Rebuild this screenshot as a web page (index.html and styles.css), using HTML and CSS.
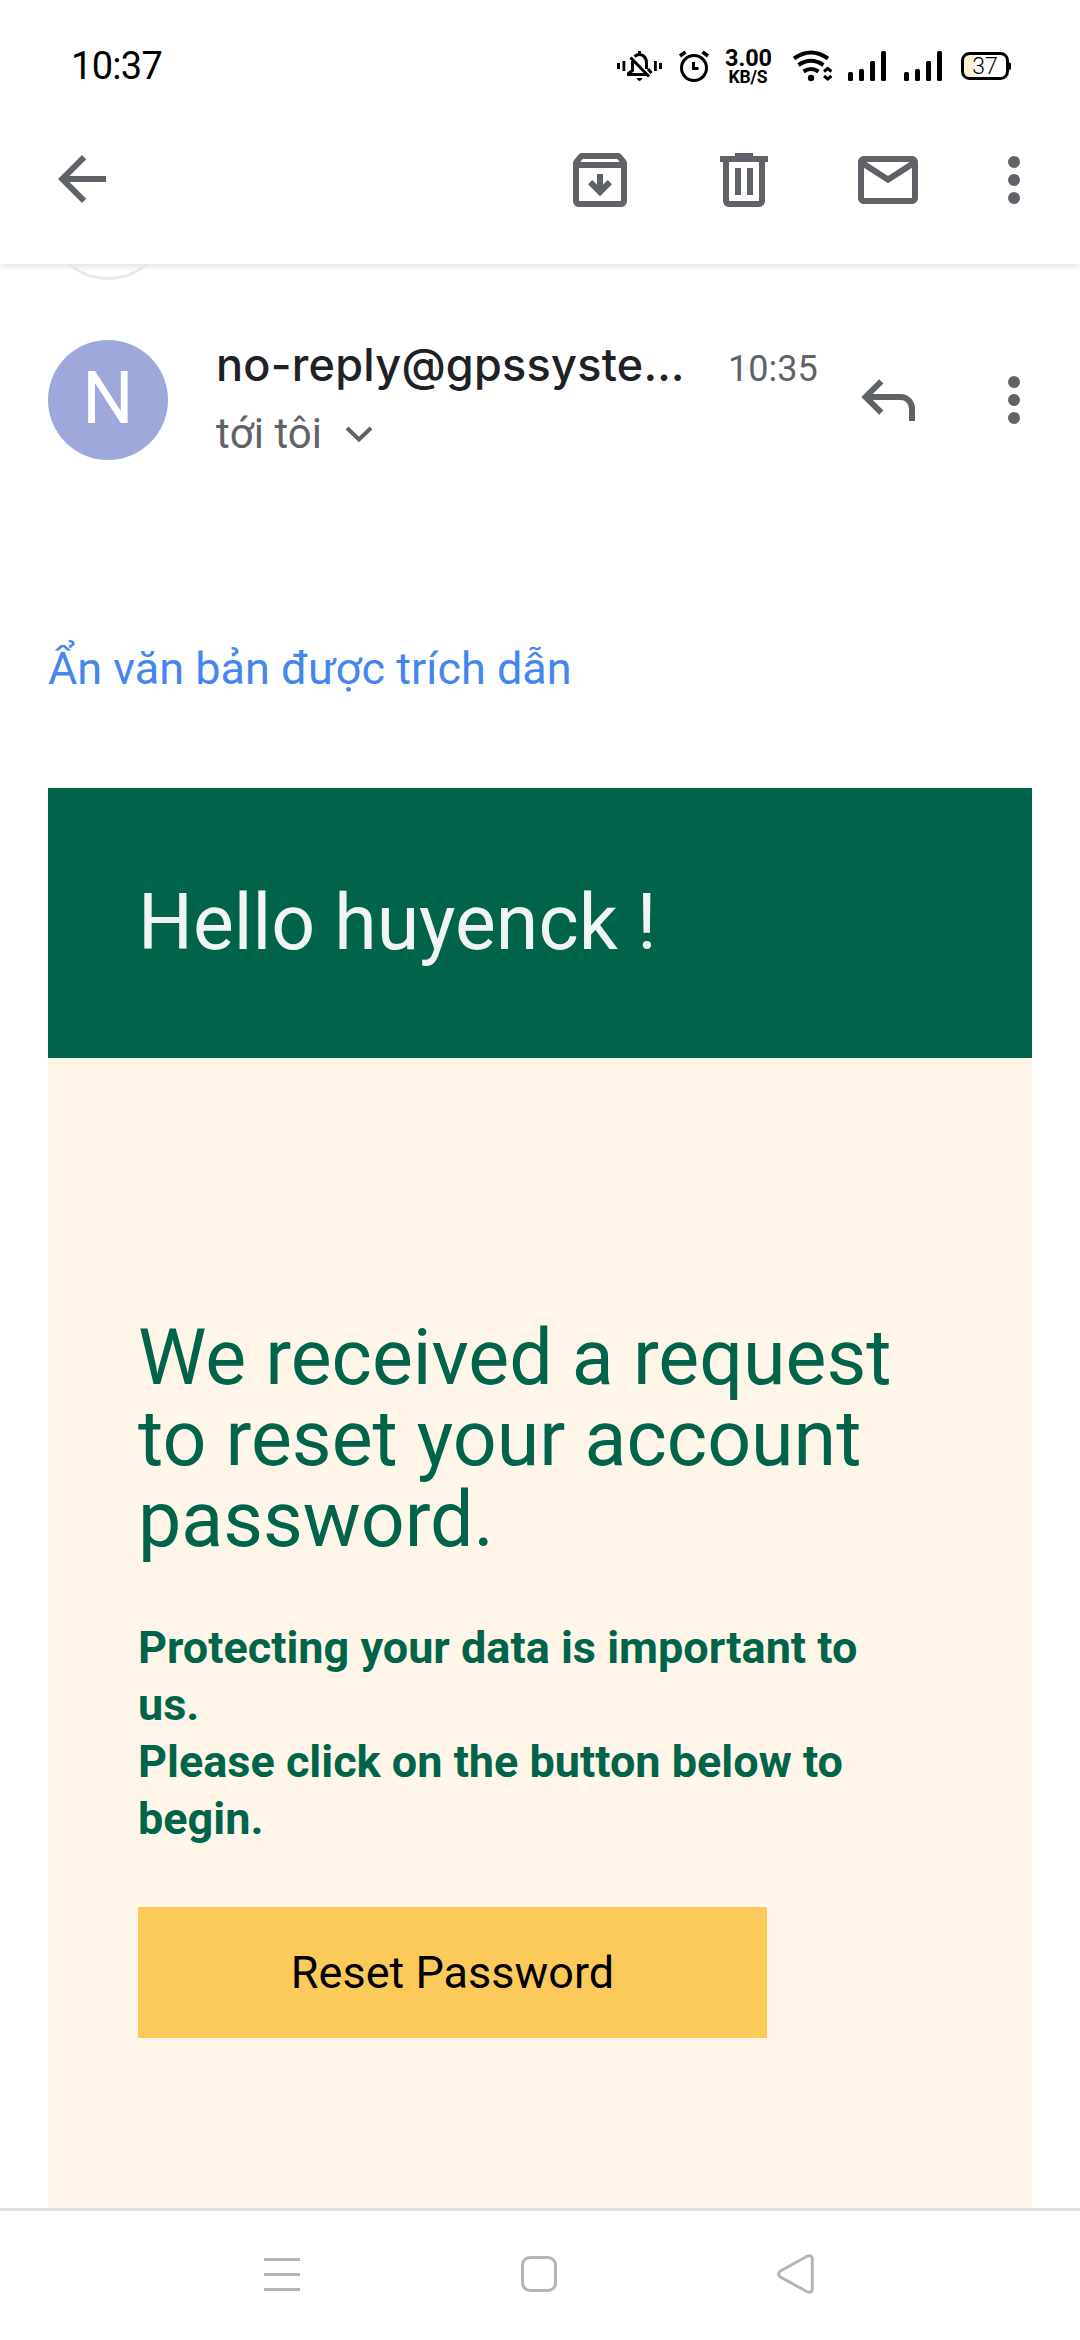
FILE: index.html
```html
<!DOCTYPE html>
<html lang="vi">
<head>
<meta charset="utf-8">
<title>Mail</title>
<link rel="stylesheet" href="styles.css">
</head>
<body>
<div class="screen">
  <header class="top">
    <div class="status">
      <span class="clock">10:37</span>
      <svg class="status-icons" width="416" height="44" viewBox="610 44 416 44">
        <!-- vibrate / muted bell -->
        <g fill="#000">
          <path d="M617 63h3v6h-3zM622.500 61h2.800v10h-2.800zM654 61h2.800v10h-2.800zM659 63h3v6h-3z"/>
          <path d="M636.500 78h6q-1 3-3 3t-3-3z"/>
          <path d="M638 51h3v4h-3z"/>
        </g>
        <g fill="none" stroke="#000" stroke-width="3">
          <path d="M634.500 56.500Q639 52.800 643.500 56Q646.500 58.500 646.500 63V69"/>
          <path d="M632.500 61V70.500L628.500 73.500V74.500H647"/>
          <path d="M630.500 57.500L649 76.500" stroke-width="3"/>
          <path d="M648 69L651.500 73"/>
        </g>
        <!-- alarm -->
        <g fill="none" stroke="#000" stroke-width="3">
          <circle cx="694" cy="68" r="12.500"/>
          <path d="M693.500 62V68.500H698.500"/>
          <path d="M680 56L685.500 52M708 56L702.500 52" stroke-width="3.500"/>
        </g>
        <!-- wifi -->
        <g fill="none" stroke="#000" stroke-width="4">
          <path d="M794 58.500Q811 46.500 828 58.500"/>
          <path d="M798.500 65Q811 56.500 823.500 65"/>
          <path d="M803.500 71.500Q811 66.500 818.500 71.500"/>
          <path d="M824 71.500L827.700 68.500L831.400 71.500M824 76L827.700 79L831.400 76" stroke-width="3"/>
        </g>
        <circle cx="811" cy="78" r="3.200"/>
        <!-- signal strength -->
        <g>
          <rect x="848" y="72" width="5" height="9" rx="1.500"/><rect x="859" y="69" width="5" height="12" rx="1.500"/><rect x="870" y="61" width="5" height="20" rx="1.500"/><rect x="881" y="51" width="5" height="30" rx="1.500"/>
          <rect x="904" y="72" width="5" height="9" rx="1.500"/><rect x="915" y="69" width="5" height="12" rx="1.500"/><rect x="926" y="61" width="5" height="20" rx="1.500"/><rect x="937" y="51" width="5" height="30" rx="1.500"/>
        </g>
        <!-- battery -->
        <path d="M975 54H968Q963 54 963 60V72Q963 78 968 78H975Z" fill="#fff1d6"/>
        <rect x="962.500" y="53.500" width="45" height="25" rx="7" fill="none" stroke="#000" stroke-width="3"/>
        <path d="M1008 61.500L1011 63.500V69L1008 71Z"/>
        <text class="battery-text" x="985" y="73.500" text-anchor="middle">37</text>
        <text class="speed" x="748.500" y="66" text-anchor="middle" textLength="47">3.00</text>
        <text class="speed-unit" x="748" y="83" text-anchor="middle" textLength="39">KB/S</text>
      </svg>
    </div>
    <div class="toolbar">
      <svg class="icon back" viewBox="0 0 24 24"><path d="M20 11H7.830l5.590-5.590L12 4l-8 8 8 8 1.410-1.410L7.830 13H20z"/></svg>
      <svg class="icon" viewBox="0 0 24 24"><path fill-rule="evenodd" d="M20.540 5.230l-1.390-1.680C18.880 3.210 18.470 3 18 3H6c-.47 0-.88.21-1.160.55L3.460 5.230C3.170 5.570 3 6.020 3 6.500V19c0 1.100.9 2 2 2h14c1.100 0 2-.9 2-2V6.500c0-.48-.17-.93-.46-1.270zM6.240 5h11.520l.83 1H5.420zM5 19V8h14v11z"/><path d="M11 10h2v3.500l1.600-1.500L16 13.400l-4 4-4-4L9.400 12l1.600 1.500z"/></svg>
      <svg class="icon" viewBox="0 0 24 24"><path fill-rule="evenodd" d="M9 3h6v1h5v2h-1v13c0 1.100-.9 2-2 2H7c-1.100 0-2-.9-2-2V6H4V4h5zM7 6v13h10V6zM9 8h2v9H9zM13 8h2v9h-2z"/></svg>
      <svg class="icon" viewBox="0 0 24 24"><path fill-rule="evenodd" d="M4 4h16c1.100 0 2 .9 2 2v12c0 1.100-.9 2-2 2H4c-1.100 0-2-.9-2-2V6c0-1.100.9-2 2-2zM4 7.900V18h16V7.900l-8 5.200zM4.800 6l7.200 4.700L19.200 6z"/></svg>
      <svg class="icon more" viewBox="0 0 24 24"><circle cx="12" cy="6" r="2"/><circle cx="12" cy="12" r="2"/><circle cx="12" cy="18" r="2"/></svg>
    </div>
  </header>
  <main class="message">
    <div class="prev-avatar"></div>
    <section class="sender">
      <div class="avatar">N</div>
      <div class="meta">
        <div class="from"><span class="name">no-reply@gpssyste…</span><span class="time">10:35</span></div>
        <div class="to"><span class="recipient">tới tôi</span><svg width="28" height="18" viewBox="0 0 28 18"><path d="M2 3L14 14.500L26 3" fill="none" stroke="#5f6368" stroke-width="4"/></svg></div>
      </div>
      <svg class="reply" width="54" height="42" viewBox="861 379 54 42"><path d="M881.300 381.300L865.600 397L881.300 412.700M866 397H900.500A11.500 11.500 0 0 1 912 408.500V421" fill="none" stroke="#5f6368" stroke-width="6"/></svg>
      <svg class="icon more" viewBox="0 0 24 24"><circle cx="12" cy="6" r="2"/><circle cx="12" cy="12" r="2"/><circle cx="12" cy="18" r="2"/></svg>
    </section>
    <a class="quoted">Ẩn văn bản được trích dẫn</a>
    <article class="mail">
      <h1 class="greeting"><span>Hello huyenck !</span></h1>
      <div class="content">
        <h2 class="headline">We received a request<br>to reset your account<br>password.</h2>
        <p class="note">Protecting your data is important to<br>us.<br>Please click on the button below to<br>begin.</p>
        <a class="button"><span>Reset Password</span></a>
      </div>
    </article>
  </main>
  <nav class="navbar">
    <svg width="36" height="33" viewBox="0 0 36 33"><path d="M0 0h36v3H0zM0 15h36v3H0zM0 30h36v3H0z" fill="#b5b5b5"/></svg>
    <svg width="36" height="36" viewBox="0 0 36 36"><rect x="1.500" y="1.500" width="33" height="33" rx="7.500" fill="none" stroke="#b5b5b5" stroke-width="3"/></svg>
    <svg width="37" height="40" viewBox="0 0 37 40"><path d="M3 17.300L30 2.300Q35.300 0.500 35.300 5V35Q35.300 39.500 30 37.700L3 22.700Q0.300 20 3 17.300Z" fill="none" stroke="#b5b5b5" stroke-width="3"/></svg>
  </nav>
</div>
</body>
</html>
```

FILE: styles.css
```css
* { box-sizing: border-box; }
body { margin: 0; background: #fff; font-family: Roboto, "Noto Sans", sans-serif; }
svg { display: block; flex: none; }
h1, h2, p { margin: 0; font-weight: 400; }

.screen { width: 1080px; height: 2340px; display: flex; flex-direction: column; overflow: hidden; background: #fff; }

.top { position: relative; z-index: 1; flex: none; height: 264px; background: #fff; box-shadow: 0 3px 6px #e4e7ea; }
.status { height: 96px; padding: 36px 54px 0 71px; display: flex; align-items: center; justify-content: space-between; }
.clock { font-size: 38px; letter-spacing: -.7px; line-height: 60px; color: #000; }
.battery-text { font-size: 23px; font-weight: 300; }
.speed { font-size: 23.500px; font-weight: 700; }
.speed-unit { font-size: 17.500px; font-weight: 700; }

.toolbar { height: 168px; padding: 0 30px 0 46px; display: flex; align-items: center; gap: 72px; }
.icon { width: 72px; height: 72px; fill: #5f6368; }
.back { margin: 0 auto 2px 0; }
.toolbar .more { margin-left: -18px; }

.message { position: relative; flex: 1; min-height: 0; overflow: hidden; padding: 76px 48px 0; }
.prev-avatar { position: absolute; left: 48px; top: -104px; width: 120px; height: 120px; border: 3px solid #e8e9ee; border-radius: 50%; }

.sender { height: 120px; display: flex; align-items: center; margin-right: -18px; }
.avatar { flex: none; width: 120px; height: 120px; border-radius: 50%; background: #9fa8da; color: #fff; font-size: 72px; line-height: 118px; text-align: center; }
.meta { flex: 1; height: 120px; margin-left: 48px; }
.from { height: 45px; display: flex; align-items: baseline; line-height: 49px; }
.name { width: 512px; font-family: Inter, sans-serif; font-size: 45px; font-weight: 500; letter-spacing: .25px; color: #202124; white-space: nowrap; }
.time { font-size: 36px; color: #5f6368; }
.to { margin-top: 24px; height: 50px; display: flex; align-items: center; gap: 23px; color: #5f6368; }
.recipient { font-size: 42px; line-height: 50px; }
.reply { margin-right: 63px; }

.quoted { display: block; margin: 179px 0 89px; font-size: 45px; line-height: 60px; color: #4586ee; }

.mail { height: 1500px; background: #fff6e9; }
.greeting { height: 270px; padding-left: 90px; display: flex; align-items: center; background: #00644a; color: #f2f4f4; font-size: 77px; line-height: 90px; }
.content { padding: 259px 90px 0; color: #00644a; }
.headline { font-size: 77.100px; line-height: 81px; white-space: nowrap; }
.note { margin-top: 59px; font-size: 45px; font-weight: 700; line-height: 57px; white-space: nowrap; }
.button { margin-top: 60px; width: 629px; height: 131px; display: flex; align-items: center; justify-content: center; background: #fcca5b; color: #000; font-size: 45px; }

.navbar { flex: none; height: 132px; border-top: 3px solid #dfe1df; padding: 0 266px 3px 264px; display: flex; align-items: center; justify-content: space-between; background: #fff; }
```
